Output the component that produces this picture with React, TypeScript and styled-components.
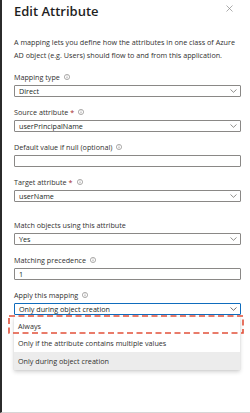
import React from "react";
import styled, { createGlobalStyle } from "styled-components";

const GlobalStyle = createGlobalStyle`
  html, body { margin: 0; padding: 0; background: #ffffff; }
  body { font-family: "Open Sans", "Noto Sans", Arial, sans-serif; color: #323130; }
`;

const Panel = styled.div`
  position: relative;
  width: 250px;
  height: 413px;
  box-sizing: border-box;
  background: #ffffff;
  border-left: 2px solid #2b2b2b;
  border-bottom: 1px solid #d6d6d6;
  padding: 2px 9px 0 12px;
`;

const Header = styled.div`
  display: flex;
  align-items: flex-start;
  justify-content: space-between;
`;

const Title = styled.h1`
  margin: 0;
  font-size: 13px;
  line-height: 18px;
  font-weight: 600;
  color: #1f1f1f;
`;

const Close = styled.button`
  border: 0;
  background: none;
  padding: 0;
  margin: 3px 6px 0 0;
  width: 9px;
  height: 9px;
  display: flex;
  color: #8a8a8a;
`;

const Description = styled.p`
  margin: 16px 0 10px;
  font-size: 7.2px;
  line-height: 13px;
  color: #323130;
`;

const Fields = styled.div`
  display: flex;
  flex-direction: column;
  gap: 10px;
`;

const Field = styled.div<{ $spaced?: boolean }>`
  position: relative;
  display: flex;
  flex-direction: column;
  gap: 3px;
  margin-top: ${(p) => (p.$spaced ? "8px" : "0")};
`;

const Label = styled.div`
  display: flex;
  align-items: center;
  gap: 4px;
  font-size: 7.2px;
  line-height: 10px;
  color: #323130;
`;

const Required = styled.span`
  color: #a4262c;
  margin-left: -2px;
`;

const Box = styled.div<{ $focused?: boolean }>`
  box-sizing: border-box;
  height: 12px;
  width: 227px;
  display: flex;
  align-items: center;
  justify-content: space-between;
  padding: 0 3px 0 4px;
  border: 1px solid ${(p) => (p.$focused ? "#0f6cbd" : "#8a8886")};
  border-radius: 1px;
  font-size: 7.2px;
  color: #201f1e;
  background: #ffffff;
`;

const Menu = styled.div`
  position: absolute;
  top: 27px;
  left: 0;
  width: 226px;
  background: #ffffff;
  box-shadow: 0 1.5px 4px rgba(0, 0, 0, 0.18), 0 0 1px rgba(0, 0, 0, 0.12);
  z-index: 2;
`;

const Option = styled.div<{ $selected?: boolean }>`
  position: relative;
  height: 17.5px;
  display: flex;
  align-items: center;
  padding-left: 4px;
  font-size: 7.2px;
  color: #323130;
  background: ${(p) => (p.$selected ? "#ececec" : "#ffffff")};
`;

const Highlight = styled.svg`
  position: absolute;
  top: -2px;
  left: -6px;
  width: 236px;
  height: 19px;
  overflow: visible;
  pointer-events: none;
`;

const Chevron = ({ dark }: { dark?: boolean }) => (
  <svg width="7" height="4" viewBox="0 0 7 4" fill="none">
    <path d="M0.5 0.5 L3.5 3.3 L6.5 0.5" stroke={dark ? "#323130" : "#605e5c"} strokeWidth="0.7" />
  </svg>
);

const Info = () => (
  <svg width="6" height="6" viewBox="0 0 6 6" fill="none">
    <circle cx="3" cy="3" r="2.6" stroke="#605e5c" strokeWidth="0.5" />
    <path d="M3 2.5 V4.4" stroke="#605e5c" strokeWidth="0.55" />
    <circle cx="3" cy="1.6" r="0.35" fill="#605e5c" />
  </svg>
);

const CloseIcon = () => (
  <svg width="7" height="7" viewBox="0 0 7 7" fill="none">
    <path d="M0.5 0.5 L6.5 6.5 M6.5 0.5 L0.5 6.5" stroke="currentColor" strokeWidth="0.7" />
  </svg>
);

type SelectProps = { value: string; focused?: boolean };
const Select = ({ value, focused }: SelectProps) => (
  <Box $focused={focused}>
    <span>{value}</span>
    <Chevron dark={focused} />
  </Box>
);

export default function App() {
  return (
    <>
      <GlobalStyle />
      <Panel>
        <Header>
          <Title>Edit Attribute</Title>
          <Close aria-label="Close">
            <CloseIcon />
          </Close>
        </Header>
        <Description>
          A mapping lets you define how the attributes in one class of Azure AD object (e.g. Users) should flow to
          and from this application.
        </Description>
        <Fields>
          <Field>
            <Label>
              Mapping type <Info />
            </Label>
            <Select value="Direct" />
          </Field>
          <Field>
            <Label>
              Source attribute <Required>*</Required> <Info />
            </Label>
            <Select value="userPrincipalName" />
          </Field>
          <Field>
            <Label>
              Default value if null (optional) <Info />
            </Label>
            <Box />
          </Field>
          <Field>
            <Label>
              Target attribute <Required>*</Required> <Info />
            </Label>
            <Select value="userName" />
          </Field>
          <Field $spaced>
            <Label>Match objects using this attribute</Label>
            <Select value="Yes" />
          </Field>
          <Field>
            <Label>
              Matching precedence <Info />
            </Label>
            <Box>1</Box>
          </Field>
          <Field>
            <Label>
              Apply this mapping <Info />
            </Label>
            <Select value="Only during object creation" focused />
            <Menu>
              <Option>
                Always
                <Highlight viewBox="0 0 236 19">
                  <rect
                    x="1"
                    y="1"
                    width="234"
                    height="17"
                    fill="none"
                    stroke="#e2503a"
                    strokeWidth="1.6"
                    strokeDasharray="6 3.5"
                  />
                </Highlight>
              </Option>
              <Option>Only if the attribute contains multiple values</Option>
              <Option $selected>Only during object creation</Option>
            </Menu>
          </Field>
        </Fields>
      </Panel>
    </>
  );
}
